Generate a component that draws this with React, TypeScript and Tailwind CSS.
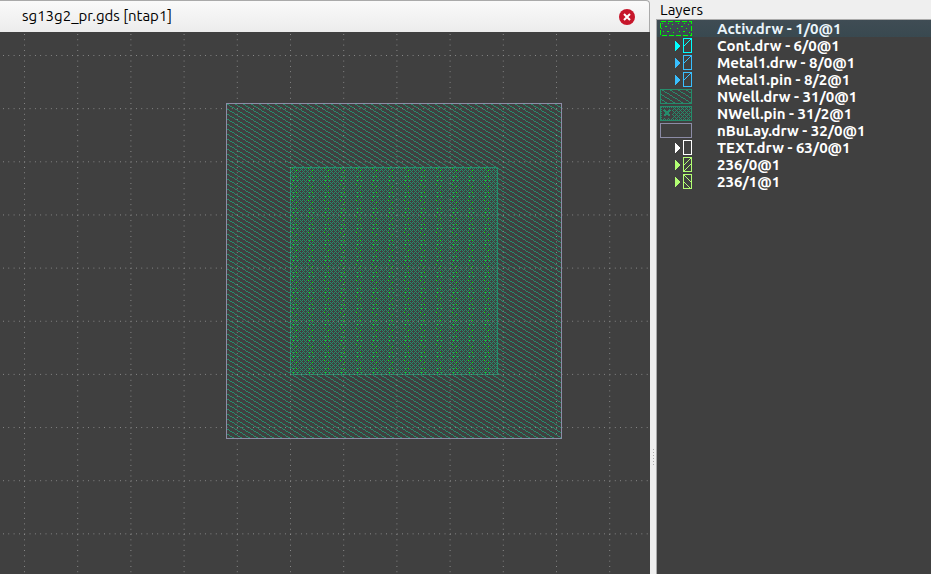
import React from "react";

type Layer = { name: string; color: string; kind: string };

const layers: Layer[] = [
  { name: "Activ.drw - 1/0@1", color: "#00ff00", kind: "activ" },
  { name: "Cont.drw - 6/0@1", color: "#00ffff", kind: "corner" },
  { name: "Metal1.drw - 8/0@1", color: "#39bfff", kind: "corner" },
  { name: "Metal1.pin - 8/2@1", color: "#39bfff", kind: "corner" },
  { name: "NWell.drw - 31/0@1", color: "#268c6b", kind: "hatch" },
  { name: "NWell.pin - 31/2@1", color: "#268c6b", kind: "pin" },
  { name: "nBuLay.drw - 32/0@1", color: "#8c8ca6", kind: "empty" },
  { name: "TEXT.drw - 63/0@1", color: "#ffffff", kind: "plain" },
  { name: "236/0@1", color: "#b3ff73", kind: "up" },
  { name: "236/1@1", color: "#b3ff73", kind: "down" },
];

function Swatch({ kind, color }: Layer) {
  const wide = ["activ", "hatch", "pin", "empty"].includes(kind);
  return (
    <svg width="34" height="17" viewBox="0 0 34 17" shapeRendering="crispEdges" className="shrink-0" aria-hidden="true" fill="none" stroke={color}>
      {wide ? (
        <>
          {kind === "activ" && <rect x="1" y="1" width="31" height="14" fill="url(#specks)" stroke="none" />}
          {kind === "hatch" && <rect x="1" y="1" width="31" height="14" fill="url(#hatch)" stroke="none" />}
          {kind === "pin" && (
            <>
              <rect x="1" y="1" width="31" height="14" fill="url(#checker)" stroke="none" />
              <rect x="3" y="3" width="10" height="10" fill="#404040" stroke="none" />
              <path d="M5 5l6 6M11 5l-6 6" strokeWidth="2" />
            </>
          )}
          <rect x="1.5" y="1.5" width="31" height="14" strokeDasharray={kind === "activ" ? "5 2" : undefined} />
        </>
      ) : (
        <>
          <path d="M16 4l5 5l-5 5z" fill={color} stroke="none" />
          <rect x="24.5" y="1.5" width="8" height="14" />
          {kind === "corner" && <path d="M25 9l8-8" />}
          {kind === "up" && <path d="M25 9l8-8M25 15l8-8" />}
          {kind === "down" && <path d="M25 2l8 8M25 9l6 6" />}
        </>
      )}
    </svg>
  );
}

function Layout() {
  return (
    <svg className="block h-full w-full" shapeRendering="crispEdges" role="img" aria-label="ntap1 layout">
      <defs>
        <pattern id="hatch" width="8" height="5" patternUnits="userSpaceOnUse">
          <path d="M0 0h2v1h-2zM2 1h1v1h-1zM3 2h2v1h-2zM5 3h1v1h-1zM6 4h2v1h-2z" fill="#268c6b" />
        </pattern>
        <pattern id="checker" width="4" height="4" patternUnits="userSpaceOnUse">
          <path d="M0 0h1v1h-1zM2 0h1v1h-1zM1 1h1v1h-1zM0 2h1v1h-1zM2 2h1v1h-1zM3 3h1v1h-1z" fill="#268c6b" />
        </pattern>
        <pattern id="specks" width="16" height="16" patternUnits="userSpaceOnUse">
          <path d="M3 3h1v1h-1zM9 3h1v1h-1zM13 4h1v1h-1zM6 6h2v1h-2zM2 8h1v1h-1zM11 8h1v1h-1zM4 11h1v1h-1zM8 11h2v1h-2zM14 12h1v1h-1z" fill="#00ff00" />
        </pattern>
        <pattern id="activ" x="290" y="135" width="16" height="16" patternUnits="userSpaceOnUse">
          <path d="M2 1h1v1h-1zM6 3h1v1h-1zM6 9h1v1h-1zM3 13h1v1h-1z" fill="#00ff00" />
          <path d="M4 5h1v1h-1zM7 13h1v1h-1zM3 9h1v1h-1z" fill="#17c037" />
        </pattern>
        <pattern id="gridColumns" x="24" y="2" width="53.2" height="5.32" patternUnits="userSpaceOnUse">
          <path d="M0 0h1v1h-1z" fill="#8c8c8c" />
        </pattern>
        <pattern id="gridRows" x="3" y="23" width="5.32" height="53.15" patternUnits="userSpaceOnUse">
          <path d="M0 0h1v1h-1z" fill="#8c8c8c" />
        </pattern>
      </defs>
      <rect x="226" y="71" width="336" height="336" fill="url(#hatch)" />
      <rect x="290" y="135" width="208" height="208" fill="#404040" />
      <rect x="290" y="135" width="208" height="208" fill="url(#checker)" />
      <rect x="290" y="135" width="208" height="208" fill="url(#activ)" />
      <rect x="290.5" y="135.5" width="207" height="207" fill="none" stroke="#268c6b" />
      <rect width="100%" height="100%" fill="url(#gridColumns)" />
      <rect width="100%" height="100%" fill="url(#gridRows)" />
      <rect x="226.5" y="71.5" width="335" height="335" fill="none" stroke="#8c8ca6" />
    </svg>
  );
}

export default function App() {
  return (
    <div className="flex h-screen bg-[#efefef] font-['Ubuntu','Noto_Sans',sans-serif] text-[15px] text-black">
      <main className="flex min-w-0 flex-1 flex-col">
        <header className="flex h-8 items-center justify-between rounded-tr border-t border-r border-[#aaa] bg-linear-to-b from-[#fafafa] to-[#ececec] pr-3.5 pl-[22px]">
          <span>sg13g2_pr.gds [ntap1]</span>
          <button aria-label="Close tab" className="size-4 rounded-full bg-[#c7162b]">
            <svg viewBox="0 0 16 16" className="size-4" stroke="white" strokeWidth="2"><path d="M5 5l6 6M11 5l-6 6" /></svg>
          </button>
        </header>
        <div className="min-h-0 flex-1 bg-[#404040]"><Layout /></div>
      </main>
      <div className="flex w-1.5 flex-col items-center justify-end gap-0.5 pb-[109px]" aria-hidden="true">
        {[0, 1, 2, 3, 4, 5].map((i) => <i key={i} className="size-px bg-[#aaa]" />)}
      </div>
      <aside className="flex w-[275px] flex-col">
        <h2 className="h-[19px] pl-1 leading-[20px]">Layers</h2>
        <ul className="flex-1 border-t border-l border-[#aaa] bg-[#404040] font-bold text-white">
          {layers.map((layer, i) => (
            <li key={layer.name} className={i === 0 ? "flex h-[17px] bg-linear-to-b from-[#3f4c54] to-[#394950] pl-0.5 leading-[18px] text-[#eaf5fb]" : "flex h-[17px] pl-0.5 leading-[18px]"}>
              <Swatch {...layer} />
              <span className="pl-6">{layer.name}</span>
            </li>
          ))}
        </ul>
      </aside>
    </div>
  );
}
